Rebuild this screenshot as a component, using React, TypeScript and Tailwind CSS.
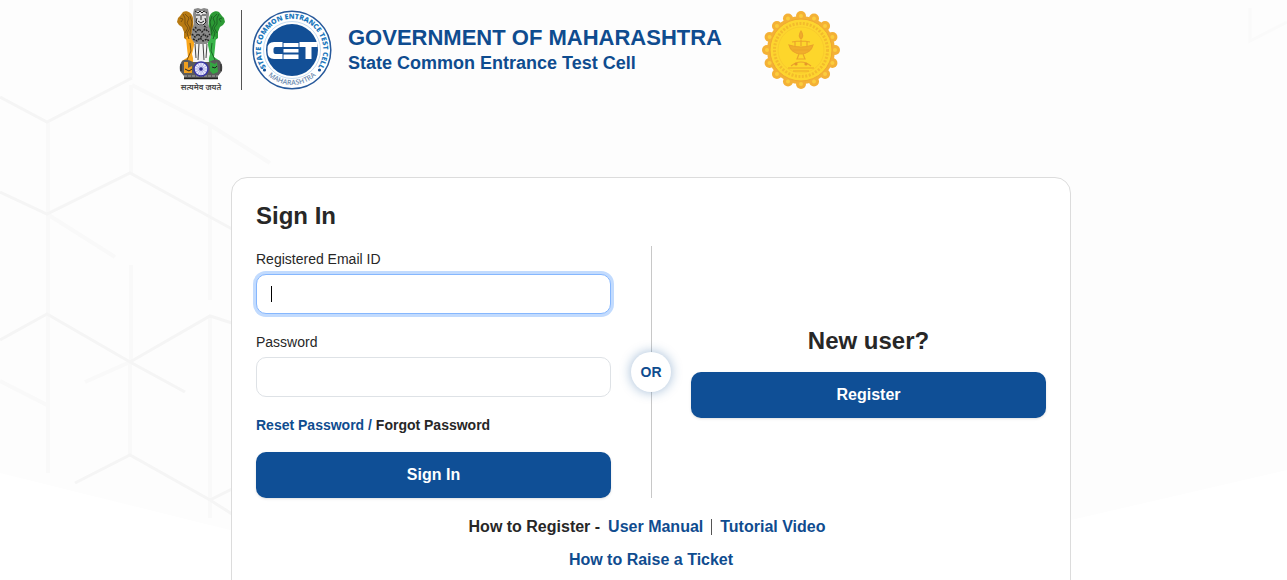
import React, { useState } from 'react'

const points = (count: number, fn: (i: number) => [number, number]) =>
  Array.from({ length: count }, (_, i) => fn(i))

function Lion({ mane, leg, dark }: { mane: string; leg: string; dark: string }) {
  return (
    <g>
      <path
        d="M6 4C10 2 15 5 16 10L17 25C16 30 14 33 11 33L7 30L7 24L5 19L2 17L0 14L1 10L3 8Z"
        fill={mane}
      />
      <path d="M9 29L17 27L17 38L15 46L17 54L8 56L5 53L11 49L10 40Z" fill={leg} />
      <path
        d="M3 10L6 11L4 14M8 6L12 10L10 15L13 20L10 25L12 31M6 6L8 10L8 16L11 20L8 25M13 8L15 14L13 25L15 28M13 35L14 43L10 52"
        fill="none"
        stroke={dark}
        strokeWidth="1"
      />
    </g>
  )
}

function Emblem() {
  return (
    <svg
      viewBox="0 0 48 84"
      className="h-[84px] w-12 shrink-0"
      role="img"
      aria-label="State Emblem of India"
    >
      <Lion mane="#b87a12" leg="#f9a61c" dark="#7d520f" />
      <g transform="matrix(-1 0 0 1 48 0)">
        <Lion mane="#2c9a35" leg="#39b54a" dark="#1c6625" />
      </g>
      <path
        d="M17 1L21 0L24 1L27 0L31 1L32 6L31 16L33 21L34 30L30 36L18 36L14 30L15 21L17 16L16 6Z"
        fill="#8a8a8a"
      />
      <path d="M19 3H29V13L26 18H22L19 13Z" fill="#ddd" />
      <path
        d="M18 3L21 5L23 3L25 5L27 3L30 5M19 7H23M25 7H29M24 7V12M20 10L19 14L22 17H26L29 14L28 10M21 13L24 15L27 13"
        fill="none"
        stroke="#222"
        strokeWidth="1"
      />
      <path
        d="M16 21L19 24L22 21L25 24L28 21L32 24M15 26L18 29L21 26L24 29L27 26L30 29L33 26M16 31L20 33L23 30L26 33L30 31L32 33M18 19L20 21M27 18L30 20"
        fill="none"
        stroke="#222"
        strokeWidth="1.4"
        strokeDasharray="2 1"
      />
      <path d="M17 36H31L32 55H16Z" fill="#f4f4f4" />
      <path d="M18 36L19 50M22 36L21 52M26 36L27 52M30 36L29 50" stroke="#444" fill="none" />
      <path
        d="M5 53Q9 50 16 54H32Q39 50 43 53Q46 57 45 63L41 68V71H7V68L3 63Q2 57 5 53Z"
        fill="#5b5b5b"
      />
      <path d="M7 54H11V60L15 58V65H7Z" fill="#f0a01e" />
      <path d="M33 54L38 56L40 54L41 64L36 66L33 63Z" fill="#35a642" />
      <path
        d="M4 56V63M44 56V63M8 61L12 63L15 61M35 59L38 60L40 58"
        stroke="#222"
        fill="none"
      />
      <path d="M7 68H41" stroke="#aaa" strokeWidth="1" strokeDasharray="3 1" />
      <path d="M7 70.5H41" stroke="#222" strokeWidth="1.4" />
      <circle cx="24" cy="61" r="7" fill="#e9e9fb" stroke="#3734a3" strokeWidth="1.6" />
      {points(12, i => [
        24 + 6 * Math.cos((i * Math.PI) / 6),
        61 + 6 * Math.sin((i * Math.PI) / 6)
      ]).map(([x, y], i) => (
        <line key={i} x1="24" y1="61" x2={x} y2={y} stroke="#8a89d6" strokeWidth=".6" />
      ))}
      <circle cx="24" cy="61" r="1.8" fill="#2c2991" />
      <text
        x="24"
        y="82"
        fontSize="8"
        fontWeight="600"
        textAnchor="middle"
        fill="#444"
        className="font-['Noto_Sans_Devanagari','Noto_Sans',sans-serif]"
      >
        सत्यमेव जयते
      </text>
    </svg>
  )
}

function CetLogo() {
  return (
    <svg
      viewBox="0 0 80 80"
      className="size-20 shrink-0 font-['Open_Sans',sans-serif]"
      role="img"
      aria-label="State Common Entrance Test Cell"
    >
      <defs>
        <path id="ring-top" d="M13.4 56.2A31.2 31.2 0 1 1 66.6 56.2" />
        <path id="ring-bottom" d="M10 58A35 35 0 0 0 70 58" />
      </defs>
      <circle cx="40" cy="40" r="38.8" fill="#fff" stroke="#27599b" strokeWidth="1.5" />
      <circle cx="40" cy="40" r="28.5" fill="none" stroke="#b9d4ed" strokeWidth=".8" />
      <circle cx="40" cy="40" r="26" fill="#124f96" />
      <text fontSize="7" fontWeight="800" fill="#1c78bd">
        <textPath href="#ring-top" startOffset="50%" textAnchor="middle">
          STATE COMMON ENTRANCE TEST CELL
        </textPath>
      </text>
      <text fontSize="7" fontWeight="600" fill="#6d8bb0">
        <textPath href="#ring-bottom" startOffset="50%" textAnchor="middle">
          MAHARASHTRA
        </textPath>
      </text>
      <circle cx="12.5" cy="60" r="1.6" fill="#124f96" />
      <circle cx="67.5" cy="60" r="1.6" fill="#124f96" />
      <g fill="#fff">
        <path d="M30.5 32H22Q15.5 32 15.5 38.5V42Q15.5 49 22 49H30.5V44H23.5Q21.5 44 21.5 42V39Q21.5 37 23.5 37H30.5Z" />
        <path d="M31.5 33H46.5V37H31.5ZM31.5 39H46.5V42.5H31.5ZM31.5 44.5H46.5V49H31.5Z" />
        <path d="M47.5 32H65.5V37H59.5V49H53.5V37H47.5Z" />
      </g>
    </svg>
  )
}

function MaharashtraSeal() {
  const petals = points(16, i => [
    39 + 34 * Math.sin((i * Math.PI) / 8),
    39 - 34 * Math.cos((i * Math.PI) / 8)
  ])
  return (
    <svg
      viewBox="0 0 78 78"
      className="size-[78px] shrink-0"
      role="img"
      aria-label="Seal of Maharashtra"
    >
      <circle cx="39" cy="39" r="34" fill="#f4b136" />
      {petals.map(([x, y], i) => (
        <circle key={i} cx={x} cy={y} r="5" fill="#f4b136" />
      ))}
      {petals.map(([x, y], i) => (
        <circle key={i} cx={x} cy={y} r="2" fill="#fbcd3d" />
      ))}
      <circle cx="39" cy="39" r="31" fill="#fdd52f" stroke="#f0a92f" strokeWidth="1" />
      <circle
        cx="39"
        cy="39"
        r="26.5"
        fill="none"
        stroke="#f3bb2c"
        strokeWidth="3"
        strokeDasharray="2 1.5"
      />
      <circle cx="39" cy="39" r="23" fill="#fdd62b" stroke="#f6c52d" strokeWidth=".7" />
      <g fill="none" stroke="#eba42b" strokeWidth="1.2">
        <path d="M39 20C37 23 37 26 39 28C41 26 41 23 39 20Z" fill="#f1ad2b" />
        <path d="M27 34Q39 38 51 34C50 39 45 43 39 43C33 43 28 39 27 34Z" fill="#f1ad2b" />
        <path d="M30 31Q39 29 48 31M33 31V35M45 31V35M39 29V35M31 39H47M37 43L35 48H43L41 43" />
        <path d="M29 55Q39 47 49 55M26 57H52M31 60H47" />
      </g>
      <circle cx="34" cy="53" r="1.6" fill="#e59729" />
      <circle cx="44" cy="53" r="1.6" fill="#e59729" />
    </svg>
  )
}

// faint hexagon mesh behind the page
function Backdrop() {
  return (
    <div className="pointer-events-none absolute inset-0 overflow-hidden" aria-hidden="true">
      <svg width="644" height="580" className="absolute top-0 left-0" fill="none">
        <path d="M0 0H644V580L230 530L0 473Z" fill="#fdfdfd" />
        <g stroke="#f9f9f9" strokeWidth="4">
          <path d="M48 122V473M131 0V78M131 85V173M131 265V362M210 125V300M210 316V400" />
          <path d="M132 85L210 125L270 163M47 214L115 257" />
          <path d="M130 362L85 382M0 381L47 405M210 400V518M130 362V455" />
        </g>
        <g stroke="#f5f5f5" strokeWidth="3">
          <path d="M0 97L47 122L132 78M0 192L47 214L130 173L232 229M0 340L47 314L130 362L185 392M130 362L210 316L232 323" />
          <path d="M75 483L130 455L210 500L232 514M210 500L232 489" />
        </g>
      </svg>
      <svg width="644" height="580" className="absolute top-0 right-0" fill="none">
        <path d="M0 0H644V470L428 520L0 580Z" fill="#fdfdfd" />
        <path d="M607 8V41L644 22" stroke="#fafafa" strokeWidth="3" />
      </svg>
    </div>
  )
}

const fieldClass =
  'block h-10 w-full rounded-[10px] border border-[#dee2e6] bg-white px-3 text-base text-[#212529] outline-none focus:border-[#86b7fe] focus:ring-[3px] focus:ring-[#c2dbfe]'
const buttonClass =
  'h-[46px] w-full rounded-[10px] bg-[#0f4f96] text-base font-bold text-white shadow-sm hover:bg-[#0c4280]'
const linkClass = 'text-[#0f4c8f] hover:underline'

export default function App() {
  const [email, setEmail] = useState('')
  const [password, setPassword] = useState('')
  const [emailFocused, setEmailFocused] = useState(true)
  const showCaret = emailFocused && !email

  return (
    <div className="relative h-screen overflow-x-hidden overflow-y-auto bg-white font-['Liberation_Sans',Arial,sans-serif] text-[#272727]">
      <Backdrop />
      <div className="relative pl-[15px]">
        <header className="mx-auto flex h-[100px] max-w-[948px] items-center">
          <Emblem />
          <div className="mr-2.5 ml-4 h-20 w-px bg-[#555]" />
          <CetLogo />
          <div className="ml-4 text-[#0f4c8f]">
            <h1 className="text-[22px] leading-[26px] font-bold">GOVERNMENT OF MAHARASHTRA</h1>
            <p className="text-lg leading-6 font-bold">State Common Entrance Test Cell</p>
          </div>
          <div className="ml-10">
            <MaharashtraSeal />
          </div>
        </header>

        <main className="mx-auto mt-[77px] max-w-[840px] rounded-2xl border border-[#dcdcdc] bg-white p-6">
          <div className="grid grid-cols-2 gap-20">
            <form onSubmit={e => e.preventDefault()}>
              <h2 className="text-2xl leading-7 font-bold">Sign In</h2>

              <label htmlFor="email" className="mt-[19px] mb-[5px] block text-sm">
                Registered Email ID
              </label>
              <div className="relative">
                <input
                  id="email"
                  type="email"
                  autoFocus
                  value={email}
                  onChange={e => setEmail(e.target.value)}
                  onFocus={() => setEmailFocused(true)}
                  onBlur={() => setEmailFocused(false)}
                  className={`${fieldClass} ${showCaret ? 'caret-transparent' : ''}`}
                />
                {showCaret && (
                  <span className="pointer-events-none absolute top-3 left-[15px] h-4 w-px bg-black" />
                )}
              </div>

              <label htmlFor="password" className="mt-[18px] mb-[5px] block text-sm">
                Password
              </label>
              <input
                id="password"
                type="password"
                value={password}
                onChange={e => setPassword(e.target.value)}
                className={fieldClass}
              />

              <p className="mt-[18px] mb-[17px] text-sm font-bold">
                <a href="#reset" className={linkClass}>
                  Reset Password /
                </a>{' '}
                <a href="#forgot" className="hover:underline">
                  Forgot Password
                </a>
              </p>

              <button type="submit" className={buttonClass}>
                Sign In
              </button>
            </form>

            <section className="relative flex flex-col justify-center pt-11">
              <div className="absolute top-11 bottom-0 -left-10 w-px bg-[#c8c8c8]" />
              <span className="absolute top-[150px] -left-[60px] flex size-10 items-center justify-center rounded-full bg-white text-sm font-bold text-[#0f4c8f] shadow-[0_0_12px_rgba(15,79,150,0.4)]">
                OR
              </span>
              <h2 className="mb-[17px] text-center text-2xl leading-7 font-bold">New user?</h2>
              <button type="button" className={buttonClass}>
                Register
              </button>
            </section>
          </div>

          <nav className="mt-[17px] flex flex-col items-center gap-[9px] pb-6 text-base font-bold">
            <div className="flex items-center pr-2">
              <span className="mr-2">How to Register -</span>
              <a href="#manual" className={linkClass}>
                User Manual
              </a>
              <span className="mx-2 h-4 w-px bg-[#555]" />
              <a href="#tutorial" className={linkClass}>
                Tutorial Video
              </a>
            </div>
            <a href="#ticket" className={linkClass}>
              How to Raise a Ticket
            </a>
          </nav>
        </main>
      </div>
    </div>
  )
}
